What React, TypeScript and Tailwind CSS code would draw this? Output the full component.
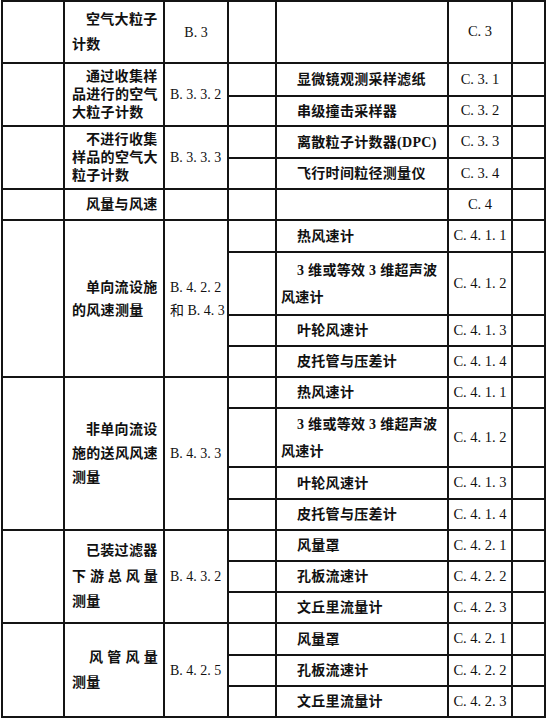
import React from 'react'

type Line = { t: string; indent?: boolean; spread?: 'full' | 'inset' }

interface Group {
  row: number
  span: number
  lead: string
  lines: Line[]
  refs: string[]
  centerRef?: boolean
}

interface Item {
  name: string[]
  code: string
}

const ROW_START: Record<number, string> = {
  1: 'row-start-1', 2: 'row-start-2', 3: 'row-start-3', 4: 'row-start-4', 5: 'row-start-5',
  6: 'row-start-6', 7: 'row-start-7', 8: 'row-start-8', 9: 'row-start-9', 10: 'row-start-10',
  11: 'row-start-11', 12: 'row-start-12', 13: 'row-start-13', 14: 'row-start-14', 15: 'row-start-15',
  16: 'row-start-16', 17: 'row-start-17', 18: 'row-start-18', 19: 'row-start-19', 20: 'row-start-20',
}

const ROW_SPAN: Record<number, string> = {
  1: 'row-span-1', 2: 'row-span-2', 3: 'row-span-3', 4: 'row-span-4',
}

const groups: Group[] = [
  { row: 1, span: 1, lead: 'leading-[25px]', lines: [{ t: '空气大粒子', indent: true }, { t: '计数' }], refs: ['B. 3'], centerRef: true },
  { row: 2, span: 2, lead: 'leading-[18px]', lines: [{ t: '通过收集样', indent: true }, { t: '品进行的空气' }, { t: '大粒子计数' }], refs: ['B. 3. 3. 2'] },
  { row: 4, span: 2, lead: 'leading-[18px]', lines: [{ t: '不进行收集', indent: true }, { t: '样品的空气大' }, { t: '粒子计数' }], refs: ['B. 3. 3. 3'] },
  { row: 6, span: 1, lead: 'leading-[25px]', lines: [{ t: '风量与风速', indent: true }], refs: [] },
  { row: 7, span: 4, lead: 'leading-[23px]', lines: [{ t: '单向流设施', indent: true }, { t: '的风速测量' }], refs: ['B. 4. 2. 2', '和 B. 4. 3'] },
  { row: 11, span: 4, lead: 'leading-[24px]', lines: [{ t: '非单向流设', indent: true }, { t: '施的送风风速' }, { t: '测量' }], refs: ['B. 4. 3. 3'] },
  { row: 15, span: 3, lead: 'leading-[25.5px]', lines: [{ t: '已装过滤器', indent: true }, { t: '下游总风量', spread: 'full' }, { t: '测量' }], refs: ['B. 4. 3. 2'] },
  { row: 18, span: 3, lead: 'leading-[25px]', lines: [{ t: '风管风量', spread: 'inset' }, { t: '测量' }], refs: ['B. 4. 2. 5'] },
]

const flowItems: Item[] = [
  { name: ['热风速计'], code: 'C. 4. 1. 1' },
  { name: ['3 维或等效 3 维超声波', '风速计'], code: 'C. 4. 1. 2' },
  { name: ['叶轮风速计'], code: 'C. 4. 1. 3' },
  { name: ['皮托管与压差计'], code: 'C. 4. 1. 4' },
]

const volumeItems: Item[] = [
  { name: ['风量罩'], code: 'C. 4. 2. 1' },
  { name: ['孔板流速计'], code: 'C. 4. 2. 2' },
  { name: ['文丘里流量计'], code: 'C. 4. 2. 3' },
]

const items: Item[] = [
  { name: [], code: 'C. 3' },
  { name: ['显微镜观测采样滤纸'], code: 'C. 3. 1' },
  { name: ['串级撞击采样器'], code: 'C. 3. 2' },
  { name: ['离散粒子计数器(DPC)'], code: 'C. 3. 3' },
  { name: ['飞行时间粒径测量仪'], code: 'C. 3. 4' },
  { name: [], code: 'C. 4' },
  ...flowItems,
  ...flowItems,
  ...volumeItems,
  ...volumeItems,
]

function NameLine({ line }: { line: Line }) {
  if (line.spread) {
    return (
      <div className={`flex w-[86px] justify-between ${line.spread === 'inset' ? 'pl-[17px]' : ''}`}>
        {line.t.split('').map((c, i) => (
          <span key={i}>{c}</span>
        ))}
      </div>
    )
  }
  return <div className={line.indent ? 'pl-[14px]' : ''}>{line.t}</div>
}

export default function App() {
  return (
    <div className="min-h-[718px] bg-white">
      <div
        className="ml-[1px] grid w-fit gap-[2px] bg-[#141414] p-[2px] text-[14px] tracking-[0.3px] font-bold text-[#111] grid-cols-[60px_98px_62px_46px_170px_62px_31px] grid-rows-[60px_31px_28px_30px_29px_29px_30px_61px_29px_29px_29px_57px_30px_29px_29px_29px_29px_30px_29px_29px]"
        style={{ fontFamily: '"Liberation Serif", "Noto Sans CJK SC", serif' }}
      >
        {groups.map((g) => (
          <React.Fragment key={g.row}>
            <div className={`col-start-1 bg-white ${ROW_START[g.row]} ${ROW_SPAN[g.span]}`} />
            <div className={`col-start-2 flex flex-col justify-center bg-white pl-[7px] ${g.lead} ${ROW_START[g.row]} ${ROW_SPAN[g.span]}`}>
              {g.lines.map((l, i) => (
                <NameLine key={i} line={l} />
              ))}
            </div>
            <div
              className={`col-start-3 flex flex-col justify-center bg-white font-normal ${g.lead} ${g.centerRef ? 'items-center' : 'pl-[5px]'} ${ROW_START[g.row]} ${ROW_SPAN[g.span]}`}
            >
              {g.refs.map((r, i) => (
                <div key={i} className="whitespace-nowrap tracking-normal">{r}</div>
              ))}
            </div>
          </React.Fragment>
        ))}

        {items.map((it, i) => {
          const row = ROW_START[i + 1]
          return (
            <React.Fragment key={i}>
              <div className={`col-start-4 bg-white ${row}`} />
              <div className={`col-start-5 flex flex-col justify-center bg-white pl-[4px] leading-[27px] ${row}`}>
                {it.name.map((n, j) => (
                  <div key={j} className={j === 0 ? 'whitespace-nowrap pl-[16px]' : 'whitespace-nowrap'}>
                    {n}
                  </div>
                ))}
              </div>
              <div className={`col-start-6 flex items-center justify-center whitespace-nowrap bg-white text-[14.5px] font-normal tracking-normal ${row}`}>
                {it.code}
              </div>
              <div className={`col-start-7 bg-white ${row}`} />
            </React.Fragment>
          )
        })}
      </div>
    </div>
  )
}
